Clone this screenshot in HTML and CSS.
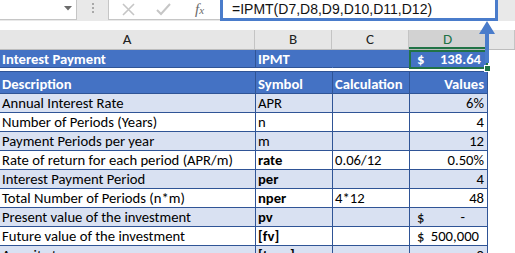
FILE: index.html
```html
<!DOCTYPE html>
<html>
    <head>
        <title>IPMT</title>
        <link rel="stylesheet" href="styles.css">
    </head>
    <body>
        <div class="ribbon">
            <div class="namebox">
                <svg class="caret" width="8" height="5" viewBox="0 0 8 5"><path d="M0 0 H8 L4 4.5 Z" fill="#6b6b6b"/></svg>
            </div>
            <div class="grip"><i></i><i></i><i></i></div>
            <div class="fx-buttons">
                <svg width="13" height="13" viewBox="0 0 13 13"><path d="M1 1 L12 12 M12 1 L1 12" stroke="#c6c6c6" stroke-width="1.6"/></svg>
                <svg width="15" height="13" viewBox="0 0 15 13"><path d="M1 7 L5 11 L14 1" stroke="#c6c6c6" stroke-width="2" fill="none"/></svg>
                <span class="fx">f<span>x</span></span>
            </div>
            <div class="formula">=IPMT(D7,D8,D9,D10,D11,D12)</div>
        </div>

        <div class="col-heads">
            <div class="head">A</div>
            <div class="head">B</div>
            <div class="head">C</div>
            <div class="head sel">D</div>
            <div class="head"></div>
        </div>

        <div class="sheet">
            <div class="row title">
                <div class="cell bold">Interest Payment</div>
                <div class="cell bold">IPMT</div>
                <div class="cell"></div>
                <div class="cell active"><span>$</span><span>138.64</span><i class="handle"></i></div>
            </div>
            <div class="spacer"></div>
            <div class="row head-row">
                <div class="cell">Description</div>
                <div class="cell">Symbol</div>
                <div class="cell">Calculation</div>
                <div class="cell num">Values</div>
            </div>
            <div class="row band">
                <div class="cell">Annual Interest Rate</div>
                <div class="cell">APR</div>
                <div class="cell"></div>
                <div class="cell num">6%</div>
            </div>
            <div class="row">
                <div class="cell">Number of Periods (Years)</div>
                <div class="cell">n</div>
                <div class="cell"></div>
                <div class="cell num">4</div>
            </div>
            <div class="row band">
                <div class="cell">Payment Periods per year</div>
                <div class="cell">m</div>
                <div class="cell"></div>
                <div class="cell num">12</div>
            </div>
            <div class="row">
                <div class="cell">Rate of return for each period (APR/m)</div>
                <div class="cell bold">rate</div>
                <div class="cell">0.06/12</div>
                <div class="cell num">0.50%</div>
            </div>
            <div class="row band">
                <div class="cell">Interest Payment Period</div>
                <div class="cell bold">per</div>
                <div class="cell"></div>
                <div class="cell num">4</div>
            </div>
            <div class="row">
                <div class="cell">Total Number of Periods (n*m)</div>
                <div class="cell bold">nper</div>
                <div class="cell">4*12</div>
                <div class="cell num">48</div>
            </div>
            <div class="row band">
                <div class="cell">Present value of the investment</div>
                <div class="cell bold">pv</div>
                <div class="cell"></div>
                <div class="cell money"><span>$</span><span class="dash">-</span></div>
            </div>
            <div class="row">
                <div class="cell">Future value of the investment</div>
                <div class="cell bold">[fv]</div>
                <div class="cell"></div>
                <div class="cell money"><span>$</span><span>500,000</span></div>
            </div>
            <div class="row band">
                <div class="cell">Annuity type</div>
                <div class="cell bold">[type]</div>
                <div class="cell"></div>
                <div class="cell num">0</div>
            </div>
        </div>

        <svg class="arrow" width="18" height="44" viewBox="0 0 18 44">
            <path d="M9 0 L17 13 H11 V42 H7 V13 H1 Z" fill="#4a7ccb"/>
        </svg>
    </body>
</html>
```

FILE: styles.css
```css
body {
    margin: 0;
    width: 515px;
    height: 253px;
    overflow: hidden;
    background-color: #fff;
    font-family: "Carlito", "Lato", sans-serif;
    font-size: 14.67px;
    color: #000;
    position: relative;
}

/* formula bar */

.ribbon {
    display: flex;
    height: 21px;
    background-color: #e9e9e9;
}

.namebox {
    width: 77px;
    height: 20px;
    background-color: #fff;
    border-right: 1px solid #c6c6c6;
    border-bottom: 1px solid #c6c6c6;
    box-sizing: border-box;
    position: relative;
}

.caret {
    position: absolute;
    left: 64px;
    top: 6px;
}

.grip {
    width: 31px;
    display: flex;
    flex-direction: column;
    align-items: center;
    padding-top: 3px;
    gap: 2px;
}

.grip i {
    width: 2px;
    height: 2px;
    background-color: #a9a9a9;
}

.fx-buttons {
    width: 112px;
    height: 20px;
    box-sizing: border-box;
    background-color: #fff;
    border-left: 1px solid #c6c6c6;
    border-bottom: 1px solid #c6c6c6;
    display: flex;
    align-items: center;
    padding-left: 13px;
    gap: 21px;
}

.fx {
    font-family: "Liberation Serif", serif;
    font-style: italic;
    font-size: 15px;
    color: #6a6a6a;
    margin-left: 3px;
}

.fx span {
    font-size: 11px;
}

.formula {
    width: 278px;
    height: 21px;
    box-sizing: border-box;
    border: 3px solid #4a7ccb;
    border-top: none;
    background-color: #fff;
    padding-left: 9px;
    font-family: "Liberation Sans", sans-serif;
    font-size: 14px;
    line-height: 18px;
    color: #111;
}

/* column headers */

.col-heads {
    display: grid;
    grid-template-columns: 255px 77px 77px 78px 1fr;
    margin-top: 9px;
    height: 20px;
    background-color: #e6e6e6;
    border-bottom: 1px solid #bdbdbd;
    box-sizing: border-box;
}

.head {
    border-right: 1px solid #c4c4c4;
    text-align: center;
    font-size: 15px;
    line-height: 19px;
    color: #222;
}

.head.sel {
    background-color: #d2d2d2;
    color: #217346;
    border-bottom: 2px solid #217346;
    height: 19px;
    box-sizing: border-box;
    border-right-color: #ababab;
}

/* sheet */

.sheet {
    width: 488px;
}

.row {
    display: grid;
    grid-template-columns: 255px 77px 77px 79px;
    height: 19px;
    box-sizing: border-box;
    border-bottom: 1px solid #2f5496;
}

.cell {
    display: flex;
    align-items: flex-end;
    padding: 0 2px 0 2px;
    line-height: 17px;
    white-space: nowrap;
    overflow: hidden;
    border-left: 1px solid #2f5496;
}

.cell:first-child {
    border-left: none;
}

.cell:last-child {
    border-right: 1px solid #2f5496;
}

.band {
    background-color: #d9e1f2;
}

.bold {
    font-weight: bold;
}

.num {
    justify-content: flex-end;
    padding-right: 3px;
}

.money {
    justify-content: space-between;
    padding-left: 7px;
    padding-right: 8px;
}

.money .dash {
    margin-right: 14px;
}

.title {
    height: 18px;
    background-color: #4472c4;
    color: #fff;
    border-bottom: 1px solid #2f5496;
}

.title .cell {
    border-left-color: #2f5496;
}

.title .cell:nth-child(3) {
    border-left-color: #4472c4;
}

.title .cell:last-child {
    border-right: none;
}

.active {
    position: relative;
    overflow: visible;
    border: 2px solid #217346 !important;
    margin-bottom: -1px;
    justify-content: space-between;
    padding: 0 5px 0 6px;
    font-weight: bold;
    line-height: 15px;
}

.handle {
    position: absolute;
    right: -5px;
    bottom: -5px;
    width: 5px;
    height: 5px;
    background-color: #217346;
    border: 1px solid #fff;
}

.spacer {
    height: 3px;
}

.head-row {
    height: 23px;
    background-color: #4472c4;
    color: #fff;
    font-weight: bold;
    border-top: 1px solid #2f5496;
}

.arrow {
    position: absolute;
    left: 478px;
    top: 21px;
}
```
